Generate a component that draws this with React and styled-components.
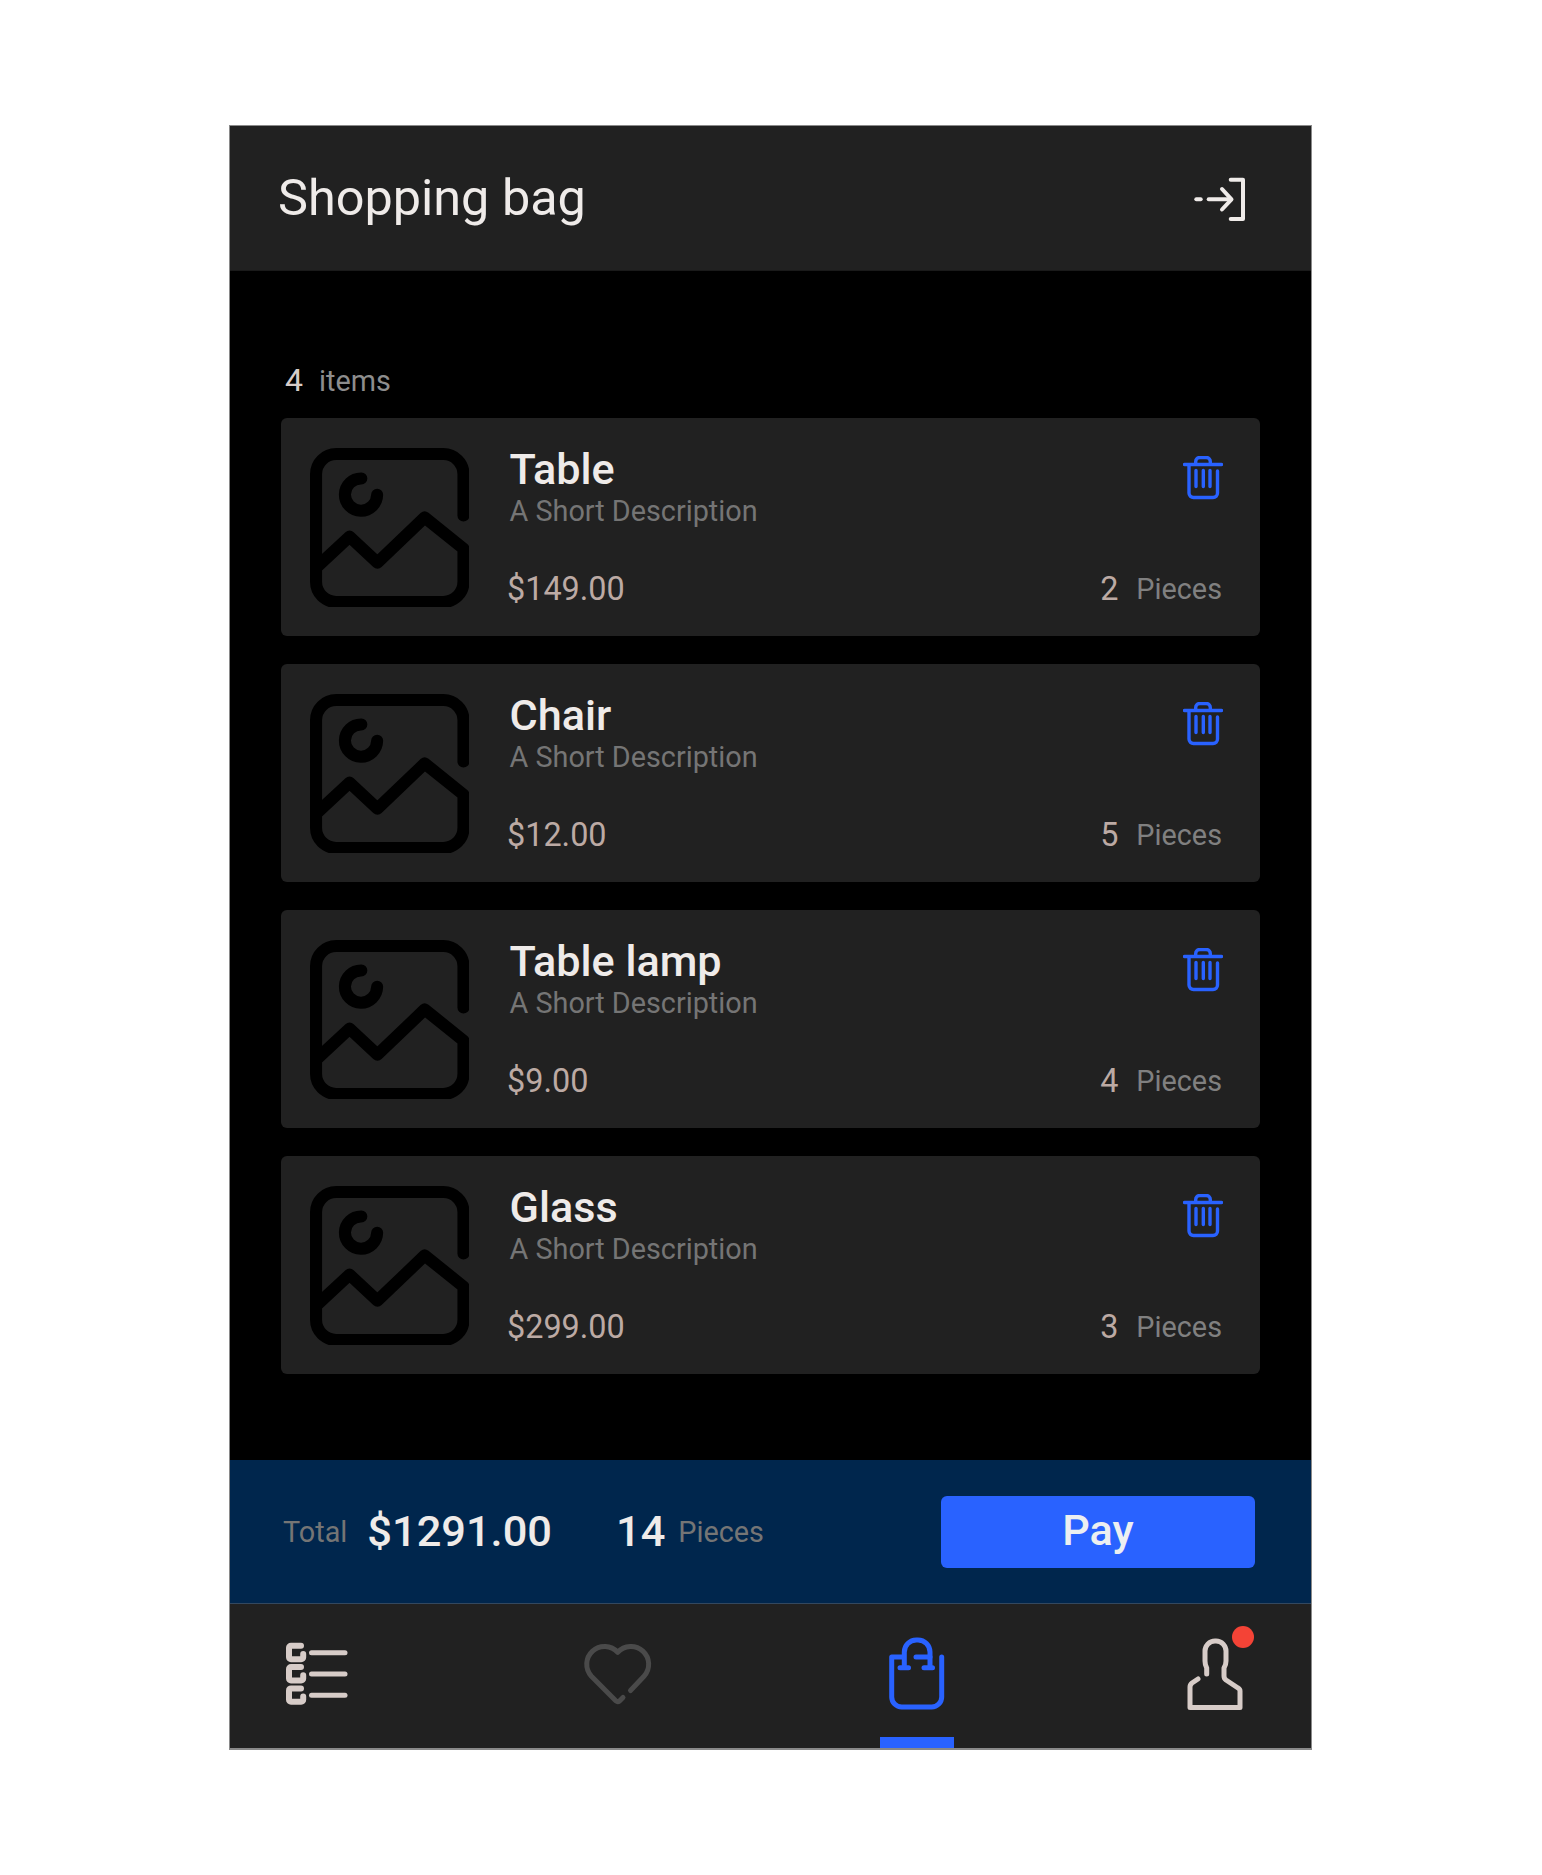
import React from "react";
import styled, { createGlobalStyle } from "styled-components";

const Global = createGlobalStyle`
  html, body { margin: 0; padding: 0; background: #fff; }
  * { box-sizing: border-box; }
  body { font-family: Roboto, "Noto Sans", sans-serif; }
`;

const Page = styled.div`
  width: 1542px;
  height: 1875px;
  padding-top: 125px;
`;

const Phone = styled.main`
  width: 1083px;
  margin-left: 229px;
  border: 1px solid #8a8a8a;
  border-bottom-width: 2px;
  background: #000;
  display: flex;
  flex-direction: column;
`;

const Header = styled.header`
  height: 145px;
  background: #212121;
  border-bottom: 1px solid #1a1a1a;
  display: flex;
  align-items: center;
  justify-content: space-between;
  padding: 0 63px 0 48px;
`;

const Title = styled.h1`
  margin: 0;
  font-size: 50.4px;
  font-weight: 400;
  line-height: 60px;
  color: #efebe9;
`;

const ExitSvg = styled.svg`
  width: 56px;
  height: 48px;
  margin-top: 4px;
`;

const Content = styled.section`
  height: 1189px;
  padding: 89px 51px 0;
  display: flex;
  flex-direction: column;
`;

const ItemCount = styled.div`
  display: flex;
  align-items: baseline;
  gap: 16px;
  height: 40px;
  padding-left: 4px;
  margin-bottom: 18px;
  line-height: 40px;
`;

const CountNum = styled.span`
  font-size: 32px;
  color: #d7ccc8;
`;

const CountLabel = styled.span`
  font-size: 28.8px;
  color: #8d8d8d;
`;

const List = styled.ul`
  list-style: none;
  margin: 0;
  padding: 0;
  display: flex;
  flex-direction: column;
  gap: 28px;
`;

const Card = styled.li`
  height: 218px;
  border-radius: 6px;
  background: #212121;
  display: flex;
  padding: 30px 38px 0 29px;
`;

const Thumb = styled.svg`
  width: 159px;
  height: 159px;
  flex: none;
  margin-right: 38px;
`;

const Info = styled.div`
  flex: 1;
  min-width: 0;
  display: flex;
  flex-direction: column;
`;

const TopRow = styled.div`
  display: flex;
  justify-content: space-between;
  align-items: flex-start;
  height: 119px;
`;

const Names = styled.div`
  display: flex;
  flex-direction: column;
  margin-left: 2.5px;
`;

const ItemName = styled.div`
  font-size: 43.2px;
  font-weight: 500;
  line-height: 43px;
  color: #efebe9;
`;

const ItemDesc = styled.div`
  font-size: 28.8px;
  line-height: 40px;
  color: #757575;
`;

const Trash = styled.svg`
  width: 40px;
  height: 44px;
  margin: 8px -1px 0 0;
`;

const BottomRow = styled.div`
  display: flex;
  justify-content: space-between;
  align-items: center;
  height: 44px;
`;

const Price = styled.span`
  font-size: 32.4px;
  color: #bcaaa4;
`;

const Qty = styled.div`
  display: flex;
  align-items: center;
  gap: 18px;
`;

const QtyNum = styled.span`
  font-size: 32.4px;
  color: #bcaaa4;
`;

const QtyLabel = styled.span`
  font-size: 28.8px;
  color: #808080;
`;

const Summary = styled.section`
  height: 144px;
  background: #00264d;
  border-bottom: 1px solid #33485f;
  display: flex;
  align-items: center;
  padding: 0 56px 0 53px;
`;

const SummaryRow = styled.div`
  flex: 1;
  display: flex;
  align-items: center;
`;

const TotalLabel = styled.span`
  font-size: 28.8px;
  color: #757575;
  margin-right: 20px;
`;

const Amount = styled.span`
  font-size: 43.4px;
  font-weight: 500;
  color: #efebe9;
  margin-bottom: 1px;
`;

const Count = styled.span`
  font-size: 43.4px;
  font-weight: 500;
  color: #efebe9;
  margin: 0 13px 1px 64px;
`;

const PayButton = styled.button`
  width: 314px;
  height: 72px;
  border: none;
  border-radius: 6px;
  background: #2962ff;
  color: #eceff1;
  font-family: inherit;
  font-size: 43.2px;
  font-weight: 500;
  padding: 0 0 2px;
`;

const Nav = styled.nav`
  height: 144px;
  background: #212121;
  display: flex;
  justify-content: space-between;
  padding: 0 57px 0 50px;
`;

const Tab = styled.div`
  position: relative;
  width: 74px;
  height: 100%;
  display: flex;
  justify-content: center;
  border-bottom: 11px solid ${(p) => (p.$active ? "#2962ff" : "transparent")};
`;

const TabIcon = styled.svg`
  width: 100px;
  height: 100px;
  flex: none;
  margin: 21px -13px 0;
  overflow: visible;
  fill: none;
  stroke: ${(p) => p.$color};
  stroke-width: 5;
  stroke-linecap: round;
  stroke-linejoin: round;
`;

const Badge = styled.span`
  position: absolute;
  left: 52px;
  top: 22px;
  width: 22px;
  height: 22px;
  border-radius: 50%;
  background: #f44336;
`;

const ExitIcon = () => (
  <ExitSvg viewBox="0 0 56 48" fill="none" stroke="#efebe9" strokeWidth="4" strokeLinecap="round" strokeLinejoin="round">
    <path d="M4.3 23.3H8.7" />
    <path d="M16.7 23.3H38.5" />
    <path d="M30 13L39.5 23.3L30 33.5" />
    <path d="M38.7 3.7H51V43H38.7" />
  </ExitSvg>
);

const ImageIcon = () => (
  <Thumb viewBox="0 0 158 158" fill="none" stroke="#000" strokeWidth="12" strokeLinecap="round" strokeLinejoin="round">
    <path d="M152.5 67V26a20 20 0 0 0-20-20H26A20 20 0 0 0 6 26V133a20 20 0 0 0 20 20H132.5a20 20 0 0 0 20-20V100L114 69L67 114L39.3 88L6 119" />
    <path d="M51 30.3A16 16 0 1 0 66.7 46.5" />
  </Thumb>
);

const TrashIcon = () => (
  <Trash viewBox="0 0 40 44" fill="none" stroke="#2962ff" strokeWidth="3.4" strokeLinecap="round" strokeLinejoin="round">
    <path d="M1.5 8.5H38.5" />
    <path d="M12.7 8V5.5a4 4 0 0 1 4-4H23.3a4 4 0 0 1 4 4V8" />
    <path d="M6 9V37a4.5 4.5 0 0 0 4.5 4.5H30a4.5 4.5 0 0 0 4.5-4.5V15" />
    <path d="M13 14.5V30.5M20.3 14.5V30.5M27 14.5V30.5" />
  </Trash>
);

const ListIcon = () => (
  <TabIcon $color="#d7ccc8" viewBox="0 0 100 100">
    <g transform="translate(8 5)">
      {[0, 21.3, 42.6].map((dy) => (
        <g key={dy} transform={`translate(0 ${dy})`}>
          <path strokeWidth="6" d="M26 15.8H16a2 2 0 0 0-2 2V27.2a2 2 0 0 0 2 2H26.2a2 2 0 0 0 2-2V24" />
          <path d="M36.5 22.7H70" />
        </g>
      ))}
    </g>
  </TabIcon>
);

const HeartIcon = () => (
  <TabIcon $color="#4a4a4a" viewBox="0 0 100 100">
    <g transform="translate(3 5)">
      <path d="M60.5 60.5L74 46.3A17.8 17.8 0 1 0 47.7 22.3A17.8 17.8 0 1 0 21.4 46.3L46 71Q47.7 72.5 49.5 71L53 67.5" />
    </g>
  </TabIcon>
);

const BagIcon = () => (
  <TabIcon $color="#2962ff" viewBox="0 0 100 100">
    <g transform="translate(3 0)">
      <path d="M33 32H21.7V72a10 10 0 0 0 10 10H61.7a10 10 0 0 0 10-10V32" />
      <path d="M34.3 42V27a12 12 0 0 1 12-12H48a12 12 0 0 1 12 12V42" />
      <path d="M30 42.7H38.5M54 42.7H62.5M46 32H60" />
    </g>
  </TabIcon>
);

const PersonIcon = () => (
  <TabIcon $color="#d7ccc8" viewBox="0 0 100 100">
    <g transform="translate(3 -10)">
      <path d="M28 64L22 68Q20 69.5 20 72V92.5H70V76Q70 74 68 73L56 65Q54 63.5 54 61V53Q56 50 56 46V36A10 10 0 0 0 46 26H45A10 10 0 0 0 35 36V46Q35 50 36.7 53V59" />
    </g>
  </TabIcon>
);

const items = [
  { name: "Table", price: "$149.00", qty: 2 },
  { name: "Chair", price: "$12.00", qty: 5 },
  { name: "Table lamp", price: "$9.00", qty: 4 },
  { name: "Glass", price: "$299.00", qty: 3 },
];

export default function App() {
  return (
    <Page>
      <Global />
      <Phone>
        <Header>
          <Title>Shopping bag</Title>
          <ExitIcon />
        </Header>
        <Content>
          <ItemCount>
            <CountNum>4</CountNum>
            <CountLabel>items</CountLabel>
          </ItemCount>
          <List>
            {items.map((item) => (
              <Card key={item.name}>
                <ImageIcon />
                <Info>
                  <TopRow>
                    <Names>
                      <ItemName>{item.name}</ItemName>
                      <ItemDesc>A Short Description</ItemDesc>
                    </Names>
                    <TrashIcon />
                  </TopRow>
                  <BottomRow>
                    <Price>{item.price}</Price>
                    <Qty>
                      <QtyNum>{item.qty}</QtyNum>
                      <QtyLabel>Pieces</QtyLabel>
                    </Qty>
                  </BottomRow>
                </Info>
              </Card>
            ))}
          </List>
        </Content>
        <Summary>
          <SummaryRow>
            <TotalLabel>Total</TotalLabel>
            <Amount>$1291.00</Amount>
            <Count>14</Count>
            <TotalLabel>Pieces</TotalLabel>
          </SummaryRow>
          <PayButton>Pay</PayButton>
        </Summary>
        <Nav>
          <Tab><ListIcon /></Tab>
          <Tab><HeartIcon /></Tab>
          <Tab $active><BagIcon /></Tab>
          <Tab><PersonIcon /><Badge /></Tab>
        </Nav>
      </Phone>
    </Page>
  );
}
